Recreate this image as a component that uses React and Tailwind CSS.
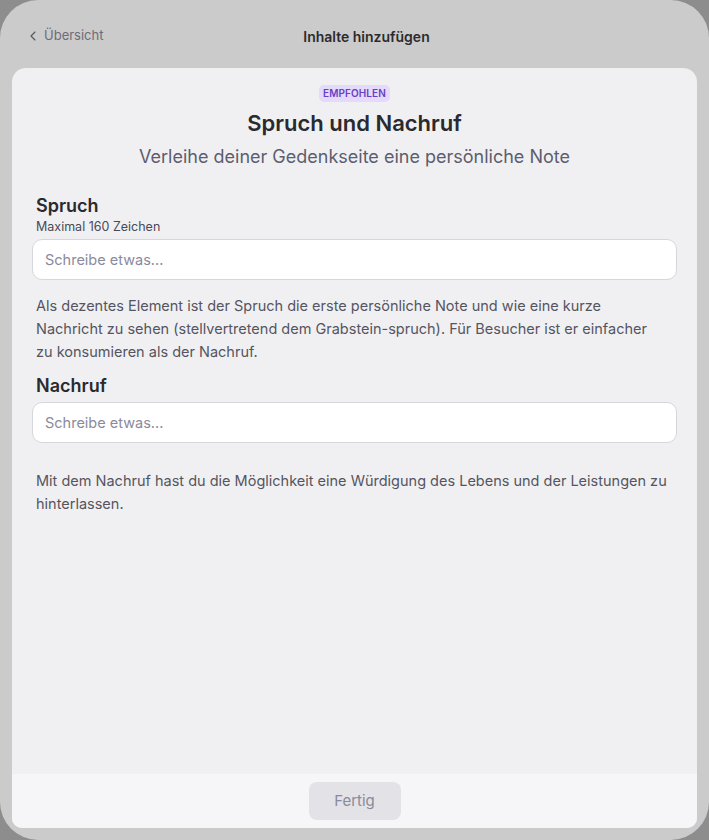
import { ChevronLeft } from "lucide-react"

const Field = ({ label, hint }) => (
  <div>
    <h3 className="text-[18px] font-semibold text-[#2a2a2e] leading-[24px] px-1">{label}</h3>
    {hint && <p className="text-[12.5px] text-[#4a4a55] leading-[16px] mt-[1px] px-1">{hint}</p>}
    <input
      className="mt-[4px] w-full h-[41px] rounded-[10px] border border-[#d6d6dc] bg-white px-3 text-[14.5px] text-[#2a2a2e] placeholder:text-[#8a8a9c] outline-none"
      placeholder="Schreibe etwas..."
    />
  </div>
)

export default function App() {
  return (
    <div className="w-[709px] h-[840px] bg-[#8d8d8d] font-['Inter',sans-serif]">
      <div className="w-full h-full rounded-[38px] bg-[#cbcbcb] flex flex-col px-[12px] pb-[12px]">
        {/* Header */}
        <div className="h-[68px] flex items-center relative pt-[3px]">
          <button className="flex items-center gap-[3px] ml-[13px] text-[13px] text-[#6b6b78]">
            <ChevronLeft size={16} strokeWidth={1.6} className="text-[#55555f]" />
            Übersicht
          </button>
          <h1 className="absolute left-0 right-0 text-center pl-[24px] pt-[1px] text-[14px] font-semibold text-[#2b2b2e] pointer-events-none">
            Inhalte hinzufügen
          </h1>
        </div>

        {/* Panel */}
        <div className="flex-1 flex flex-col rounded-t-[14px] rounded-b-[10px] bg-[#f0f0f3] overflow-hidden">
          <div className="flex-1 px-[20px] pt-[17px]">
            <div className="flex flex-col items-center">
              <span className="rounded-[5px] bg-[#e4dafb] px-[4px] h-[17px] flex items-center text-[10px] font-semibold text-[#6a3ec6] tracking-[0.1px]">
                EMPFOHLEN
              </span>
              <h2 className="mt-[7px] text-[22px] font-semibold text-[#2a2a2e] leading-[28px]">Spruch und Nachruf</h2>
              <p className="mt-[8px] text-[18px] text-[#5d5d6e] leading-[24px]">
                Verleihe deiner Gedenkseite eine persönliche Note
              </p>
            </div>

            <div className="mt-[25px]">
              <Field label="Spruch" hint="Maximal 160 Zeichen" />
            </div>
            <p className="mt-[14px] px-1 text-[14.5px] leading-[23px] text-[#55555f]">
              Als dezentes Element ist der Spruch die erste persönliche Note und wie eine kurze
              <br />
              Nachricht zu sehen (stellvertretend dem Grabstein-spruch). Für Besucher ist er einfacher
              <br />
              zu konsumieren als der Nachruf.
            </p>

            <div className="mt-[11px]">
              <Field label="Nachruf" />
            </div>
            <p className="mt-[26px] px-1 text-[14.5px] leading-[23px] text-[#55555f]">
              Mit dem Nachruf hast du die Möglichkeit eine Würdigung des Lebens und der Leistungen zu hinterlassen.
            </p>
          </div>

          {/* Footer */}
          <div className="h-[54px] bg-[#f6f6f8] flex items-center justify-center">
            <button className="w-[92px] h-[38px] rounded-[8px] bg-[#e2e2e7] text-[15px] text-[#8a8a9c]">Fertig</button>
          </div>
        </div>
      </div>
    </div>
  )
}
